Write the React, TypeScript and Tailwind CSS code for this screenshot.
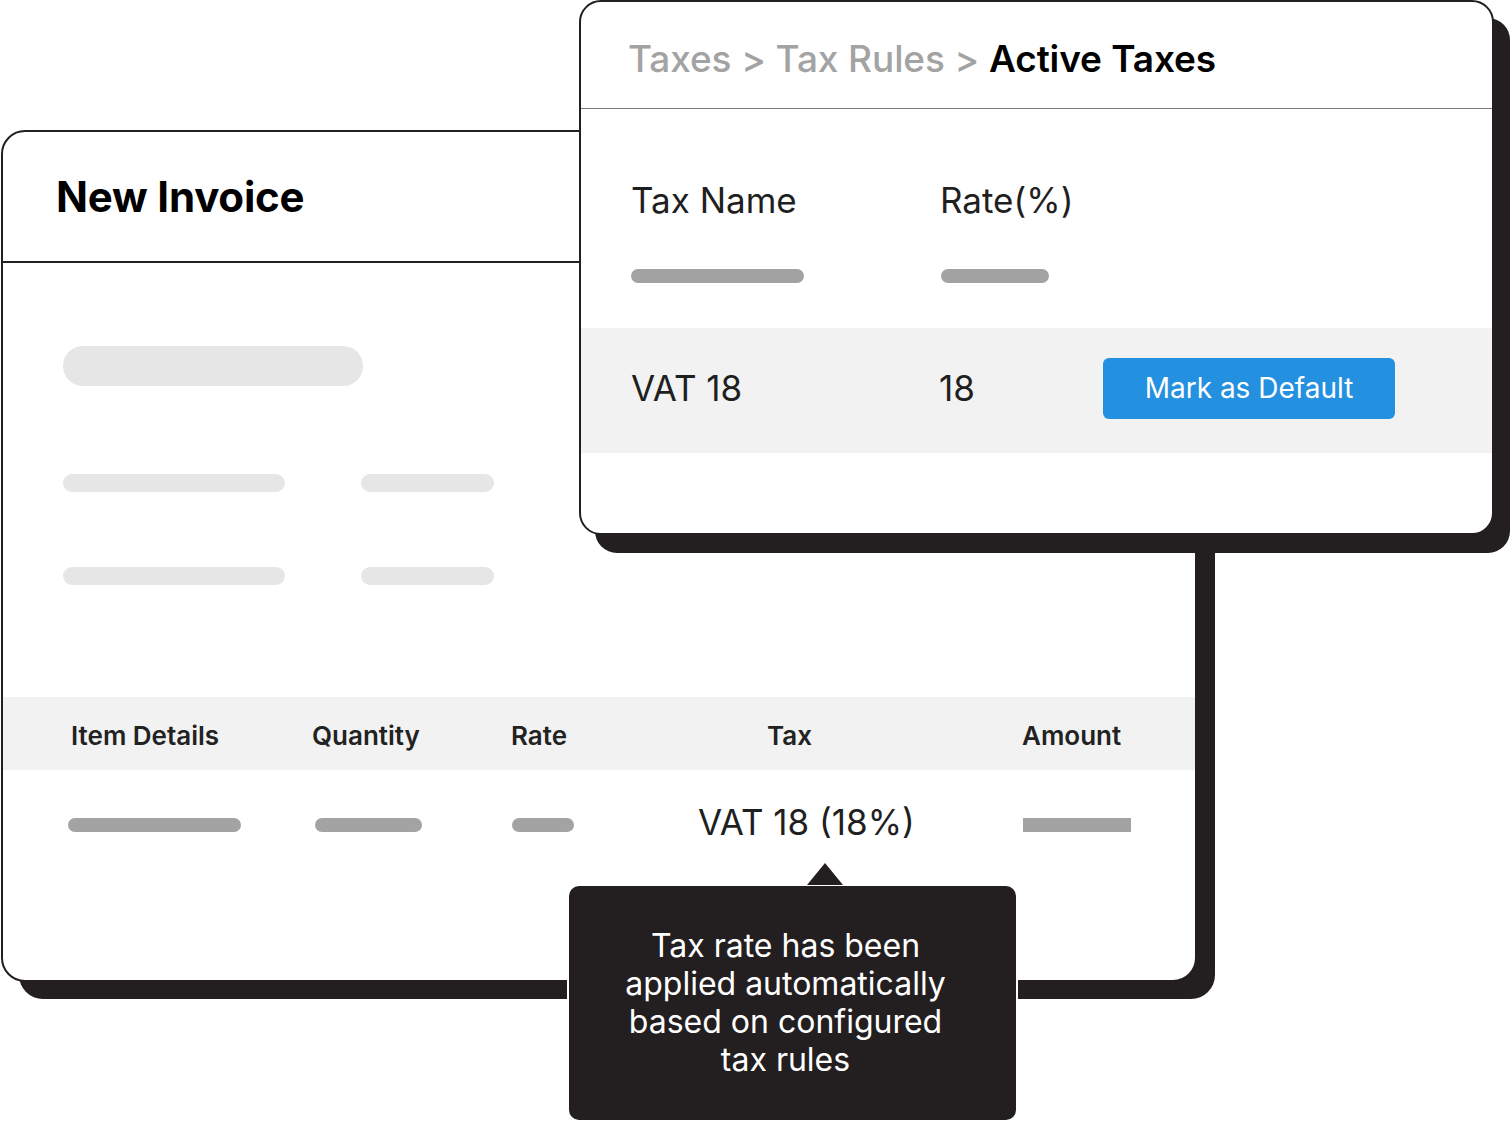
import React from 'react'

const ink = '#231f20'

function Bar({ w, h = 14, color = 'bg-[#a3a3a3]', square }: { w: number; h?: number; color?: string; square?: boolean }) {
  return (
    <div
      className={`${color} ${square ? '' : 'rounded-full'} shrink-0`}
      style={{ width: w, height: h }}
    />
  )
}

function InvoiceCard() {
  return (
    <div className="absolute left-[1px] top-[130px] w-[1196px] h-[852px] rounded-[24px] border-2 border-[#231f20] bg-white shadow-[18px_17px_0_#231f20] overflow-hidden">
      <div className="h-[131px] flex items-center pl-[53px] border-b-2 border-[#231f20]">
        <h1 className="text-[42px] font-bold text-black tracking-[-0.2px]">New Invoice</h1>
      </div>

      <div className="pl-[60px]">
        <div className="mt-[83px] h-[40px] w-[300px] rounded-full bg-[#e6e6e6]" />
        <div className="mt-[88px] flex gap-[76px]">
          <Bar w={222} h={18} color="bg-[#e6e6e6]" />
          <Bar w={133} h={18} color="bg-[#e6e6e6]" />
        </div>
        <div className="mt-[75px] flex gap-[76px]">
          <Bar w={222} h={18} color="bg-[#e6e6e6]" />
          <Bar w={133} h={18} color="bg-[#e6e6e6]" />
        </div>
      </div>

      <div className="mt-[112px] h-[73px] bg-[#f2f2f2] flex items-center pt-[4px] pl-[68px] text-[26px] font-semibold text-[#222]">
        <span className="w-[241px] shrink-0">Item Details</span>
        <span className="w-[199px] shrink-0">Quantity</span>
        <span className="w-[256px] shrink-0">Rate</span>
        <span className="w-[255px] shrink-0">Tax</span>
        <span>Amount</span>
      </div>

      <div className="h-[110px] flex items-center pl-[65px]">
        <div className="w-[247px] shrink-0"><Bar w={173} /></div>
        <div className="w-[197px] shrink-0"><Bar w={107} /></div>
        <div className="w-[186px] shrink-0"><Bar w={62} /></div>
        <div className="w-[325px] shrink-0 text-[35px] text-[#1f1f1f] -mt-[6px]">VAT 18 (18%)</div>
        <Bar w={108} square />
      </div>
    </div>
  )
}

function TaxPanel() {
  return (
    <div className="absolute left-[579px] top-0 w-[915px] h-[535px] rounded-[22px] border-2 border-[#231f20] bg-white shadow-[16px_18px_0_#231f20] overflow-hidden">
      <div className="h-[107px] flex items-center pt-[8px] pl-[47px] border-b border-[#7a7a7a] text-[37px] font-medium tracking-[-0.1px]">
        <span className="text-[#a3a3a3]">Taxes &gt; Tax Rules &gt;&nbsp;</span>
        <span className="text-black font-semibold">Active Taxes</span>
      </div>

      <div className="pl-[50px]">
        <div className="pt-[71px] h-[111px] flex items-center text-[35px] text-[#1f1f1f] leading-[40px]">
          <span className="w-[309px] shrink-0">Tax Name</span>
          <span>Rate(%)</span>
        </div>
        <div className="mt-[49px] flex">
          <div className="w-[310px] shrink-0"><Bar w={173} /></div>
          <Bar w={108} />
        </div>
      </div>

      <div className="mt-[45px] h-[125px] bg-[#f2f2f2] flex items-center pb-[5px] pl-[50px] text-[35px] text-[#1f1f1f]">
        <span className="w-[308px] shrink-0">VAT 18</span>
        <span className="w-[164px] shrink-0">18</span>
        <button className="w-[292px] h-[61px] rounded-[6px] bg-[#2490e0] text-white text-[28px] flex items-center justify-center">
          Mark as Default
        </button>
      </div>
    </div>
  )
}

function Tooltip() {
  return (
    <div className="absolute left-[567px] top-[884px] w-[451px] h-[238px] rounded-[12px] border-2 border-white bg-[#231f20] flex items-center justify-center pr-[14px]">
      <svg
        className="absolute left-[236px] -top-[24px]"
        width="40"
        height="24"
        viewBox="0 0 40 24"
      >
        <polygon points="2,23 20,1 38,23" fill={ink} />
      </svg>
      <p className="text-white text-[32px] leading-[38px] text-center">
        Tax rate has been
        <br />
        applied automatically
        <br />
        based on configured
        <br />
        tax rules
      </p>
    </div>
  )
}

export default function App() {
  return (
    <div className="relative w-[1511px] h-[1122px] bg-white overflow-hidden font-['Inter',sans-serif]">
      <InvoiceCard />
      <TaxPanel />
      <Tooltip />
    </div>
  )
}
